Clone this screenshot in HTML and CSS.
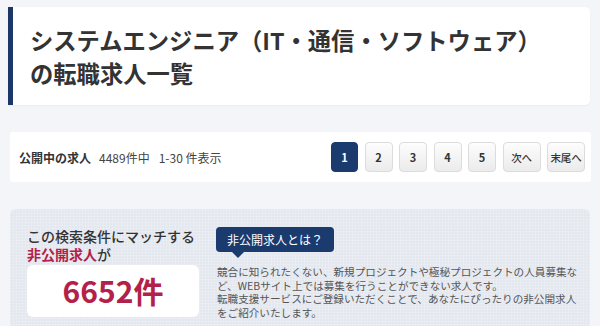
FILE: index.html
```html
<!DOCTYPE html>
<html lang="ja">
<head>
<meta charset="utf-8">
<link rel="stylesheet" href="styles.css">
</head>
<body>
<div class="page">
  <header class="title-card">
    <h1 class="title">システムエンジニア（IT・通信・ソフトウェア）<br>の転職求人一覧</h1>
  </header>

  <section class="pager-card">
    <div class="count">
      <span class="count-label">公開中の求人</span>
      <span class="count-num">4489件中</span>
      <span class="count-range">1-30 件表示</span>
    </div>
    <nav class="pager">
      <a class="pbtn active">1</a>
      <a class="pbtn">2</a>
      <a class="pbtn">3</a>
      <a class="pbtn">4</a>
      <a class="pbtn">5</a>
      <a class="pbtn wide">次へ</a>
      <a class="pbtn wide">末尾へ</a>
    </nav>
  </section>

  <section class="secret">
    <div class="secret-left">
      <div class="secret-lead">
        <div class="lead-line">この検索条件にマッチする</div>
        <div class="lead-line"><span class="accent">非公開求人</span>が</div>
      </div>
      <div class="secret-count">6652件</div>
    </div>
    <div class="secret-right">
      <div class="badge">非公開求人とは？</div>
      <p class="secret-text">競合に知られたくない、新規プロジェクトや極秘プロジェクトの人員募集など、WEBサイト上では募集を行うことができない求人です。<br>転職支援サービスにご登録いただくことで、あなたにぴったりの非公開求人をご紹介いたします。</p>
    </div>
  </section>
</div>
</body>
</html>
```

FILE: styles.css
```css
* { box-sizing: border-box; }
html, body {
  margin: 0;
  padding: 0;
  background: #f3f5f8;
  font-family: "Noto Sans CJK JP", "Noto Sans", sans-serif;
  color: #333;
}
.page {
  padding-top: 7px;
  height: 326px;
  overflow: hidden;
}
.title-card {
  margin: 0 10px 0 8px;
  background: #fff;
  border-left: 5px solid #1b3667;
  border-radius: 0 5px 5px 0;
  box-shadow: 0 1px 2px rgba(0,0,0,0.04);
  padding: 17px 16px 15px 17px;
}
.title {
  margin: 0;
  font-size: 23.3px;
  line-height: 33px;
  font-weight: 700;
  color: #333;
}
.pager-card {
  margin: 27px 9px 0 10px;
  height: 50px;
  background: #fff;
  border-radius: 3px;
  display: flex;
  align-items: center;
  justify-content: space-between;
  padding: 0 6px 0 9px;
}
.count {
  display: flex;
  align-items: center;
  font-size: 12px;
  color: #444;
}
.count-label { font-weight: 700; color: #333; margin-right: 8px; }
.count-num { margin-right: 9px; }
.pager {
  display: flex;
  gap: 6.5px;
}
.pbtn {
  width: 28px;
  height: 30px;
  display: flex;
  align-items: center;
  justify-content: center;
  font-size: 11px;
  font-weight: 700;
  color: #333;
  background: linear-gradient(#fdfdfd, #ebebeb);
  border: 1px solid #dcdcdc;
  border-radius: 4px;
}
.pbtn.active {
  width: 27px;
  background: #1b3a6e;
  border-color: #1b3a6e;
  color: #fff;
}
.pbtn.wide {
  width: 38px;
  font-size: 10.5px;
  font-weight: 500;
  letter-spacing: -0.2px;
}
.secret {
  margin: 27px 10px 0 10px;
  height: 140px;
  border-radius: 6px 6px 0 0;
  background-color: #e3e7ee;
  background-image:
    repeating-linear-gradient(0deg, rgba(255,255,255,0.18) 0 1px, transparent 1px 3px),
    repeating-linear-gradient(90deg, rgba(255,255,255,0.18) 0 1px, transparent 1px 3px);
  display: flex;
  gap: 17px;
  padding: 17px 10px 0 17px;
}
.secret-left {
  width: 172px;
  flex: none;
}
.secret-lead {
  padding-top: 1px;
  font-size: 14px;
  font-weight: 500;
  color: #333;
}
.lead-line {
  height: 18px;
  line-height: 18px;
}
.accent {
  color: #b3214a;
  font-weight: 700;
}
.secret-count {
  margin-top: 2px;
  height: 52px;
  background: #fff;
  border-radius: 6px;
  display: flex;
  align-items: center;
  justify-content: center;
  font-size: 30px;
  font-weight: 700;
  color: #b3214a;
  padding-bottom: 2px;
}
.secret-right {
  flex: 1;
  min-width: 0;
}
.badge {
  position: relative;
  display: inline-block;
  height: 25px;
  line-height: 25px;
  padding: 0 11px;
  background: #1b3a6e;
  color: #fff;
  font-size: 12px;
  border-radius: 4px;
}
.badge::after {
  content: "";
  position: absolute;
  left: 16px;
  bottom: -6px;
  border-left: 6px solid transparent;
  border-right: 6px solid transparent;
  border-top: 6px solid #1b3a6e;
}
.secret-text {
  margin: 13px 0 0 1px;
  width: 365px;
  font-size: 10.6px;
  line-height: 13.5px;
  color: #555;
}
```
